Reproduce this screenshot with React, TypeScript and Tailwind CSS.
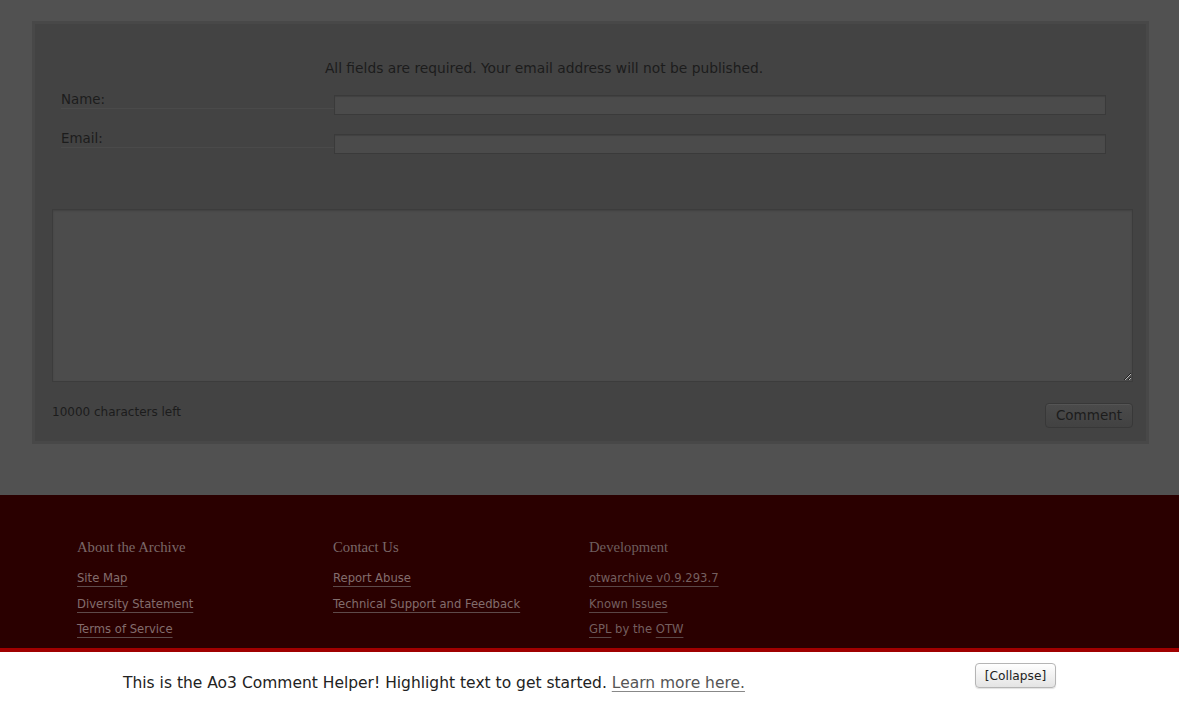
export default function App() {
  return (
    <div className="min-h-screen bg-[#515151] font-['DejaVu_Sans',sans-serif] text-[#1c1c1c]">
      <div className="pt-[21px] pl-[32px] pb-[51px]">
        <div className="w-[1117px] h-[423px] border-[3px] border-[#484848] bg-[#434343]">
          <div className="w-[1018px] pt-[34px] text-center text-[13.8px] leading-[20px]">
            All fields are required. Your email address will not be published.
          </div>

          <div className="mt-[12px] pl-[26px] flex flex-col gap-[14px]">
            <div className="flex items-start">
              <div className="w-[273px] h-[19px] leading-[19px] text-[13.4px] border-b border-[#4a4a4a]">
                Name:
              </div>
              <input className="mt-[5px] w-[772px] h-[20px] bg-[#4b4b4b] border border-[#3a3a3a] shadow-[inset_0_1px_1px_rgba(0,0,0,0.15)] outline-none" />
            </div>
            <div className="flex items-start">
              <div className="w-[273px] h-[19px] leading-[19px] text-[13.4px] border-b border-[#4a4a4a]">
                Email:
              </div>
              <input className="mt-[5px] w-[772px] h-[20px] bg-[#4b4b4b] border border-[#3a3a3a] shadow-[inset_0_1px_1px_rgba(0,0,0,0.15)] outline-none" />
            </div>
          </div>

          <div className="pl-[17px] mt-[55px]">
            <textarea className="block w-[1081px] h-[173px] bg-[#4c4c4c] border border-[#3c3c3c] shadow-[inset_0_1px_2px_rgba(0,0,0,0.15)] outline-none" />
            <div className="w-[1081px] mt-[21px] flex items-start justify-between">
              <span className="mt-[1px] text-[12px] leading-[16px]">10000 characters left</span>
              <button className="w-[88px] h-[25px] rounded-[4px] border border-[#383838] bg-linear-to-b from-[#4b4b4b] to-[#424242] shadow-[inset_0_1px_0_rgba(255,255,255,0.06)] text-[13.5px] text-[#1c1c1c]">
                Comment
              </button>
            </div>
          </div>
        </div>
      </div>

      <footer className="bg-[#2a0000] h-[280px] pt-[43px] pl-[77px] flex">
        <FooterCol
          title="About the Archive"
          links={[["Site Map"], ["Diversity Statement"], ["Terms of Service"], ["DMCA Policy"]]}
        />
        <FooterCol
          title="Contact Us"
          links={[["Report Abuse"], ["Technical Support and Feedback"]]}
        />
        <div className="w-[257px]">
          <h4 className="font-['Liberation_Serif',serif] text-[14.7px] leading-[18px] text-[#6e5e5e]">
            Development
          </h4>
          <ul className="mt-[10px] text-[11.6px] text-[#745f5f]">
            <li className="h-[25.5px] leading-[25.5px]">
              <a className="underline decoration-[#5a4646] underline-offset-[4px]">otwarchive v0.9.293.7</a>
            </li>
            <li className="h-[25.5px] leading-[25.5px]">
              <a className="underline decoration-[#5a4646] underline-offset-[4px]">Known Issues</a>
            </li>
            <li className="h-[25.5px] leading-[25.5px]">
              <a className="underline decoration-[#5a4646] underline-offset-[4px]">GPL</a> by the{" "}
              <a className="underline decoration-[#5a4646] underline-offset-[4px]">OTW</a>
            </li>
          </ul>
        </div>
      </footer>

      <div className="fixed bottom-0 inset-x-0 h-[59px] bg-white border-t-4 border-[#a00000] px-[123px] flex items-start justify-between">
        <p className="mt-[20px] text-[15.5px] leading-[22px] text-[#222]">
          This is the Ao3 Comment Helper! Highlight text to get started.{" "}
          <a className="text-[#555] underline decoration-[#888] underline-offset-[3px]">Learn more here.</a>
        </p>
        <button className="mt-[11px] w-[81px] h-[25px] rounded-[4px] border border-[#b5b5b5] bg-linear-to-b from-white to-[#e4e4e4] shadow-[0_1px_1px_rgba(0,0,0,0.12)] text-[12.2px] leading-[25px] text-[#222]">
          [Collapse]
        </button>
      </div>
    </div>
  );
}

function FooterCol({ title, links }: { title: string; links: string[][] }) {
  return (
    <div className="w-[256px]">
      <h4 className="font-['Liberation_Serif',serif] text-[14.7px] leading-[18px] text-[#7a6868]">
        {title}
      </h4>
      <ul className="mt-[10px] text-[11.6px] text-[#836d6d]">
        {links.map(([label]) => (
          <li key={label} className="h-[25.5px] leading-[25.5px]">
            <a className="underline decoration-[#5e4a4a] underline-offset-[4px]">{label}</a>
          </li>
        ))}
      </ul>
    </div>
  );
}
